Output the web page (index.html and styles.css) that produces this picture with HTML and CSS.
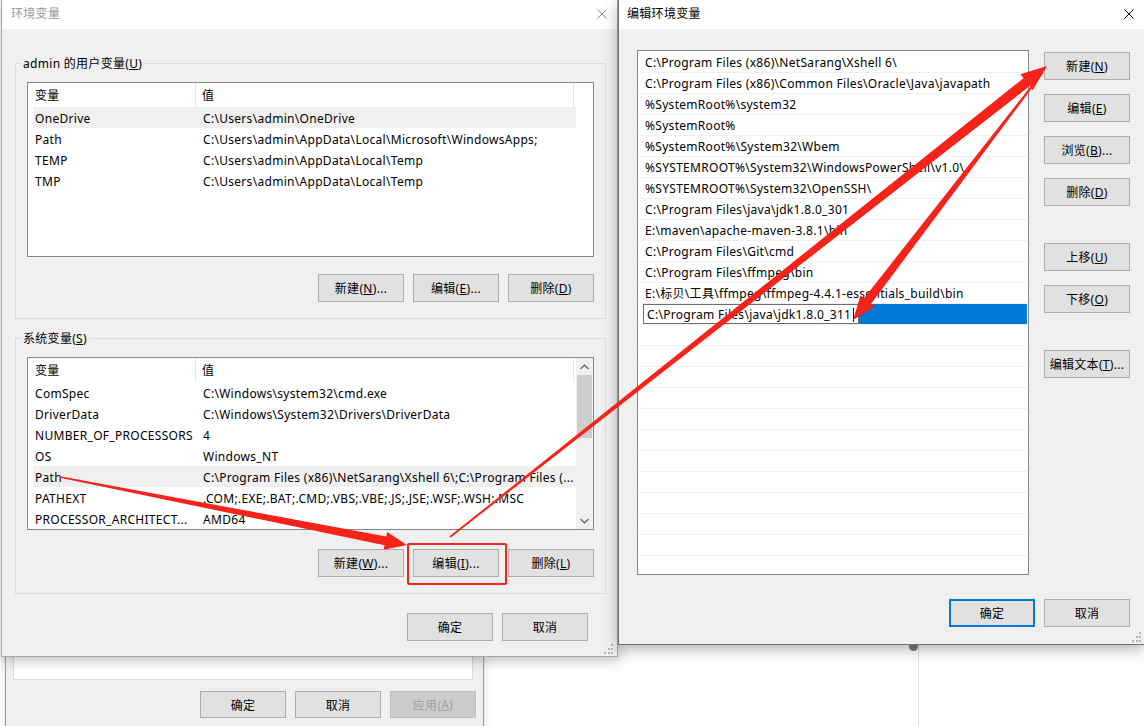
FILE: index.html
```html
<!DOCTYPE html>
<html lang="zh-CN">
<head>
<meta charset="utf-8">
<title>环境变量</title>
<link rel="stylesheet" href="styles.css">
</head>
<body>
<div class="desk">
  <div class="vline"></div>
  <div class="dot"></div>

  <!-- back window: 系统属性 -->
  <div class="win back">
    <div class="pane"></div>
    <div class="brow back-btns">
      <div class="btn">确定</div>
      <div class="btn">取消</div>
      <div class="btn disabled">应用(<u>A</u>)</div>
    </div>
  </div>

  <!-- 环境变量 -->
  <div class="win env">
    <div class="titlebar inactive">
      <span class="title">环境变量</span>
      <svg class="close" width="10" height="10" viewBox="0 0 10 10"><path d="M0.5 0.5L9.5 9.5M9.5 0.5L0.5 9.5" stroke="currentColor" stroke-width="1"/></svg>
    </div>
    <div class="body">
      <fieldset class="grp">
        <legend>admin 的用户变量(<u>U</u>)</legend>
        <div class="list user-list">
          <div class="main">
            <div class="lhead"><div class="c1">变量</div><div class="c2">值</div></div>
            <div class="lrow hl"><div class="c1">OneDrive</div><div class="c2">C:\Users\admin\OneDrive</div></div>
            <div class="lrow"><div class="c1">Path</div><div class="c2">C:\Users\admin\AppData\Local\Microsoft\WindowsApps;</div></div>
            <div class="lrow"><div class="c1">TEMP</div><div class="c2">C:\Users\admin\AppData\Local\Temp</div></div>
            <div class="lrow"><div class="c1">TMP</div><div class="c2">C:\Users\admin\AppData\Local\Temp</div></div>
          </div>
          <div class="gutter"></div>
        </div>
        <div class="brow grp-btns">
          <div class="btn">新建(<u>N</u>)...</div>
          <div class="btn">编辑(<u>E</u>)...</div>
          <div class="btn">删除(<u>D</u>)</div>
        </div>
      </fieldset>

      <fieldset class="grp grp2">
        <legend>系统变量(<u>S</u>)</legend>
        <div class="list sys-list">
          <div class="main">
            <div class="lhead"><div class="c1">变量</div><div class="c2">值</div></div>
            <div class="lrow"><div class="c1">ComSpec</div><div class="c2">C:\Windows\system32\cmd.exe</div></div>
            <div class="lrow"><div class="c1">DriverData</div><div class="c2">C:\Windows\System32\Drivers\DriverData</div></div>
            <div class="lrow"><div class="c1">NUMBER_OF_PROCESSORS</div><div class="c2">4</div></div>
            <div class="lrow"><div class="c1">OS</div><div class="c2">Windows_NT</div></div>
            <div class="lrow hl"><div class="c1">Path</div><div class="c2">C:\Program Files (x86)\NetSarang\Xshell 6\;C:\Program Files (...</div></div>
            <div class="lrow"><div class="c1">PATHEXT</div><div class="c2">.COM;.EXE;.BAT;.CMD;.VBS;.VBE;.JS;.JSE;.WSF;.WSH;.MSC</div></div>
            <div class="lrow"><div class="c1">PROCESSOR_ARCHITECT...</div><div class="c2">AMD64</div></div>
          </div>
          <div class="sbar">
            <div class="arr"><svg width="9" height="6" viewBox="0 0 9 6"><path d="M0.5 5L4.5 1L8.5 5" fill="none" stroke="#606060" stroke-width="1.2"/></svg></div>
            <div class="thumb"></div>
            <div class="track"></div>
            <div class="arr"><svg width="9" height="6" viewBox="0 0 9 6"><path d="M0.5 1L4.5 5L8.5 1" fill="none" stroke="#606060" stroke-width="1.2"/></svg></div>
          </div>
        </div>
        <div class="brow grp-btns sys-btns">
          <div class="btn">新建(<u>W</u>)...</div>
          <div class="btn">编辑(<u>I</u>)...</div>
          <div class="btn">删除(<u>L</u>)</div>
        </div>
      </fieldset>

      <div class="brow dlg-btns">
        <div class="btn">确定</div>
        <div class="btn">取消</div>
      </div>
    </div>
    <svg class="grip" width="10" height="10" viewBox="0 0 10 10"><g fill="#b5b5b5"><rect x="7" y="0" width="2" height="2"/><rect x="4" y="4" width="2" height="2"/><rect x="7" y="4" width="2" height="2"/><rect x="0" y="8" width="2" height="2"/><rect x="4" y="8" width="2" height="2"/><rect x="7" y="8" width="2" height="2"/></g></svg>
  </div>

  <!-- 编辑环境变量 -->
  <div class="win edit">
    <div class="titlebar">
      <span class="title">编辑环境变量</span>
      <svg class="close" width="10" height="10" viewBox="0 0 10 10"><path d="M0.5 0.5L9.5 9.5M9.5 0.5L0.5 9.5" stroke="currentColor" stroke-width="1"/></svg>
    </div>
    <div class="body">
      <div class="content">
        <div class="plist">
          <div class="prow">C:\Program Files (x86)\NetSarang\Xshell 6\</div>
          <div class="prow">C:\Program Files (x86)\Common Files\Oracle\Java\javapath</div>
          <div class="prow">%SystemRoot%\system32</div>
          <div class="prow">%SystemRoot%</div>
          <div class="prow">%SystemRoot%\System32\Wbem</div>
          <div class="prow">%SYSTEMROOT%\System32\WindowsPowerShell\v1.0\</div>
          <div class="prow">%SYSTEMROOT%\System32\OpenSSH\</div>
          <div class="prow">C:\Program Files\java\jdk1.8.0_301</div>
          <div class="prow">E:\maven\apache-maven-3.8.1\bin</div>
          <div class="prow">C:\Program Files\Git\cmd</div>
          <div class="prow">C:\Program Files\ffmpeg\bin</div>
          <div class="prow">E:\标贝\工具\ffmpeg\ffmpeg-4.4.1-essentials_build\bin</div>
          <div class="prow sel"><div class="editbox">C:\Program Files\java\jdk1.8.0_311<span class="caret"></span></div><div class="selfill"></div></div>
          <div class="prow"></div>
          <div class="prow"></div>
          <div class="prow"></div>
          <div class="prow"></div>
          <div class="prow"></div>
          <div class="prow"></div>
          <div class="prow"></div>
          <div class="prow"></div>
          <div class="prow"></div>
          <div class="prow"></div>
          <div class="prow"></div>
          <div class="prow"></div>
        </div>
        <div class="bcol">
          <div class="btn">新建(<u>N</u>)</div>
          <div class="btn">编辑(<u>E</u>)</div>
          <div class="btn">浏览(<u>B</u>)...</div>
          <div class="btn">删除(<u>D</u>)</div>
          <div class="spacer"></div>
          <div class="btn">上移(<u>U</u>)</div>
          <div class="btn">下移(<u>O</u>)</div>
          <div class="spacer"></div>
          <div class="btn">编辑文本(<u>T</u>)...</div>
        </div>
      </div>
      <div class="brow edit-btns">
        <div class="btn default">确定</div>
        <div class="btn">取消</div>
      </div>
    </div>
    <svg class="grip" width="10" height="10" viewBox="0 0 10 10"><g fill="#b5b5b5"><rect x="7" y="0" width="2" height="2"/><rect x="4" y="4" width="2" height="2"/><rect x="7" y="4" width="2" height="2"/><rect x="0" y="8" width="2" height="2"/><rect x="4" y="8" width="2" height="2"/><rect x="7" y="8" width="2" height="2"/></g></svg>
  </div>

  <!-- annotations -->
  <svg class="annot" width="1144" height="726" viewBox="0 0 1144 726">
    <g fill="#f5231a">
      <polygon points="60.15,476.21 386.27,536.38 387.13,531.97 407,545 383.67,549.63 384.53,545.22 59.85,477.79"/>
      <polygon points="449.50,536.37 1023.49,78.17 1020.40,74.25 1047,66 1032.78,89.95 1029.69,86.03 450.50,537.63"/>
      <polygon points="1043.64,72.49 871.17,303.69 874.74,306.42 853,320 860.46,295.48 864.03,298.21 1042.37,71.51"/>
    </g>
    <rect x="408" y="544" width="98" height="40" rx="1" fill="none" stroke="#f5231a" stroke-width="2"/>
  </svg>
</div>
</body>
</html>
```

FILE: styles.css
```css
* { box-sizing: border-box; }
html, body { margin: 0; padding: 0; }
body {
  width: 1144px;
  height: 726px;
  overflow: hidden;
  background: #ffffff;
  font-family: "Segoe UI", "Noto Sans", "Noto Sans CJK SC", sans-serif;
  font-size: 12px;
  letter-spacing: 0.3px;
  color: #000;
}
u { text-decoration: underline; text-underline-offset: 1px; }

.desk { position: relative; width: 1144px; height: 726px; overflow: hidden; }

.vline { position: absolute; left: 918px; top: 640px; width: 1px; height: 90px; background: #e3e3e3; }
.dot { position: absolute; left: 909px; top: 642px; width: 9px; height: 9px; border-radius: 50%; background: #7d7d7d; }

.win { position: absolute; background: #f0f0f0; }

/* buttons */
.btn {
  width: 86px;
  height: 28px;
  flex: none;
  background: #e1e1e1;
  border: 1px solid #adadad;
  display: flex;
  align-items: center;
  justify-content: center;
  white-space: nowrap;
}
.btn.disabled { background: #cccccc; border-color: #bfbfbf; color: #a0a0a0; }
.btn.default { border: 2px solid #0078d7; }
.brow { display: flex; justify-content: flex-end; gap: 9px; }

/* back window */
.back {
  left: 5px;
  top: 600px;
  width: 479px;
  height: 140px;
  border-left: 1px solid #a0a0a0;
  border-right: 1px solid #a0a0a0;
  padding: 0 7px 0 7px;
  box-shadow: 0 0 8px rgba(0,0,0,0.15);
}
.back .pane { height: 80px; margin-right: 3px; background: #fff; border: 1px solid #dcdcdc; border-top: none; }
.back-btns { margin-top: 11px; height: 27px; }
.back-btns .btn { height: 27px; }

/* title bars */
.titlebar {
  height: 29px;
  background: #fff;
  display: flex;
  align-items: center;
  padding: 0 0 2px 9px;
}
.titlebar .title { line-height: 16px; }
.titlebar.inactive { color: #999999; }
.titlebar .close { margin-left: auto; margin-right: 10px; color: #000; }
.titlebar.inactive .close { color: #8a8a8a; }

.grip { position: absolute; right: 3px; bottom: 2px; }

/* env dialog */
.env {
  left: 1px;
  top: 0;
  width: 617px;
  height: 657px;
  border: 1px solid #a8a8a8;
  border-top: none;
  display: flex;
  flex-direction: column;
  box-shadow: 2px 3px 12px rgba(0,0,0,0.28);
  z-index: 2;
}
.env .body { padding: 26px 11px 0 13px; }

.grp {
  margin: 0;
  min-width: 0;
  border: 1px solid #dcdcdc;
  padding: 11px 11px 16px 11px;
}
.grp legend { padding: 0 2px; margin-left: -6px; line-height: 16px; position: relative; top: 1px; }
.grp2 { margin-top: 11px; }

.list { background: #fff; border: 1px solid #828790; display: flex; overflow: hidden; }
.user-list { height: 175px; }
.sys-list { height: 173px; }
.list .main { flex: 1; min-width: 0; }
.list .gutter { width: 17px; flex: none; }

.lhead { display: flex; height: 24px; line-height: 26px; }
.lhead .c1 { width: 168px; padding-left: 7px; border-right: 1px solid #e5e5e5; }
.lhead .c2 { width: 378px; padding-left: 6px; border-right: 1px solid #e5e5e5; }

.lrow { display: flex; height: 21px; line-height: 23px; margin-left: 5px; margin-right: 0; }
.lrow.hl { background: #f0f0f0; }
.lrow .c1 { width: 163px; flex: none; padding-left: 2px; white-space: nowrap; overflow: hidden; }
.lrow .c2 { flex: 1; padding-left: 7px; white-space: nowrap; overflow: hidden; }

.sbar { width: 17px; flex: none; background: #f0f0f0; display: flex; flex-direction: column; }
.sbar .arr { height: 17px; display: flex; align-items: center; justify-content: center; }
.sbar .thumb { height: 63px; margin: 0 1px; background: #cdcdcd; }
.sbar .track { flex: 1; }

.grp-btns { margin-top: 17px; }
.sys-btns { margin-top: 19px; }
.dlg-btns { margin-top: 19px; padding-right: 18px; }

/* edit dialog */
.edit {
  left: 618px;
  top: 0;
  width: 527px;
  height: 645px;
  border-left: 1px solid #707070;
  border-bottom: 1px solid #707070;
  display: flex;
  flex-direction: column;
  box-shadow: 0 4px 14px rgba(0,0,0,0.3);
  z-index: 3;
}
.edit .titlebar .close { margin-right: 11px; }
.edit .titlebar { padding-left: 8px; }
.edit .body { padding: 21px 15px 0 18px; }
.content { display: flex; }

.plist {
  width: 392px;
  height: 525px;
  background: #fff;
  border: 1px solid #828790;
  padding-top: 1px;
  overflow: hidden;
  flex: none;
}
.prow {
  height: 21px;
  margin: 0 1px;
  padding-left: 6px;
  border-bottom: 1px solid #f0f0f0;
  line-height: 22px;
  white-space: nowrap;
  overflow: hidden;
}
.prow.sel { display: flex; padding-left: 4px; border-bottom-color: #f0f0f0; }
.editbox {
  width: 216px;
  height: 20px;
  border: 1px solid #6e6e6e;
  background: #fff;
  padding: 1px 0 0 3px;
  line-height: 18px;
  display: flex;
  align-items: center;
}
.caret { display: inline-block; width: 1px; height: 14px; background: #000; margin-left: 2px; }
.selfill { flex: 1; height: 20px; background: #0078d7; }

.bcol { display: flex; flex-direction: column; gap: 14px; margin-left: 15px; padding-top: 2px; }
.bcol .spacer { height: 9px; }
.edit-btns { margin-top: 24px; }

.annot { position: absolute; left: 0; top: 0; z-index: 10; pointer-events: none; }
```
